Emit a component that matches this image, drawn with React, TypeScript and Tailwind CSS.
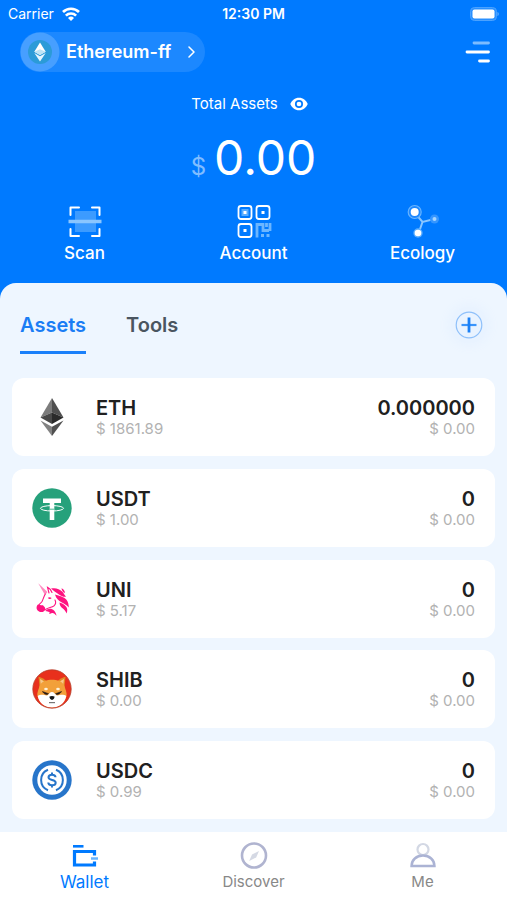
import type { ReactNode } from "react";

type Asset = {
    symbol: string;
    price: string;
    amount: string;
    value: string;
    icon: ReactNode;
};

function EthIcon() {
    return (
        <svg viewBox="0 0 40 40" className="size-10">
            <path d="M20 1 8.500 20.500 20 15.500Z" fill="#7c7c7c" />
            <path d="M20 1 31.500 20.500 20 15.500Z" fill="#4f4f4f" />
            <path d="M8.500 20.500 20 15.500V27Z" fill="#484848" />
            <path d="M31.500 20.500 20 15.500V27Z" fill="#2a2a2a" />
            <path d="M8.500 23.500 20 29.800V39Z" fill="#828282" />
            <path d="M31.500 23.500 20 29.800V39Z" fill="#505050" />
        </svg>
    );
}

function TetherIcon() {
    return (
        <svg viewBox="0 0 40 40" className="size-10">
            <circle cx="20" cy="20" r="19.700" fill="#26a17b" />
            <path d="M11 10.500h18v4.500h-6.700v17h-4.600V15H11Z" fill="#fff" />
            <ellipse
                cx="20"
                cy="20.300"
                rx="11.500"
                ry="2.700"
                fill="none"
                stroke="#fff"
                strokeWidth="1"
            />
            <path d="M18 21.200h4" stroke="#26a17b" strokeWidth=".8" />
        </svg>
    );
}

function UniIcon() {
    return (
        <svg viewBox="0 0 40 40" className="size-10" fill="#ff1280">
            <path d="M6.200 4.300 15.500 13l-2.500 3Z" fill="#ff8abf" />
            <path
                d="M17 14 15.500 8.300c2.200 1 3.700 3 4.500 5.200M13.300 15c-1.500 2.500-2 5-3.300 7.500-1.300 2-3.700 3.200-4.500 5.500M13 31c2.500-3 6.500-2 9-4.200 1.800-1.600 2-3.800 1-5.800"
                fill="none"
                stroke="#ff1280"
                strokeWidth="1.100"
                strokeLinecap="round"
            />
            <path d="M6 25.500c1.500.2 3 1 5 .8 1 1.500 2.500 2.200 2.300 3.600-.4 2.100-2 3.200-4.300 3.100-2.700-.2-4.700-2.300-4.400-4.800.1-1 .7-2.200 1.400-2.700Z" />
            <path d="M15.800 18.800c1.500-1 2.800-.8 3.800.3-.6 1.300-2.900 1.400-3.800-.3Z" />
            <path d="M19 9.500c4.500-1 8.500.3 11.200 3 1.500 1.600 2.500 3.800 3.800 5.300-3.200.2-5.200-1.200-7.400-2.600-2.300-1.500-4.800-2.900-7.600-5.700Z" />
            <path d="M29.500 9.300c2 .8 3.600 2.600 3.300 5-1.500-1-3-2.600-3.300-5Z" />
            <path d="M23 15.500c4.500 1.600 9 2.200 11.500 5.200 1.700 2 2.200 4.700 2.300 7.800-2.200-2.700-4.800-3.900-7.400-5.300-2.600-1.400-5.400-3.600-6.400-7.700Z" />
            <path d="M27.500 23.500c3.800 1.300 7 3.300 7.700 6.500.2 1.700 0 3.100-.6 4.500-1-2.500-2.700-4-4.400-5.400-1.500-1.200-2.700-3-2.700-5.600Z" />
            <path d="M13.500 32c3-3.900 9.800-3 11 4.800-1.500-2-2.800-3.100-4.500-2.900-1 .2-1.800 1-3 .7l.8-1.400c-1.500-.5-2.800-.7-4.300-1.200Z" />
        </svg>
    );
}

function ShibIcon() {
    return (
        <svg viewBox="0 0 40 40" className="size-10">
            <circle cx="20" cy="20" r="19.200" fill="#e8301c" />
            <path d="M6.500 7.800c3 .5 6.300 2.700 8.500 5l-7 9Z" fill="#e08a25" />
            <path d="M33.500 7.800c-3 .5-6.300 2.700-8.500 5l7 9Z" fill="#e08a25" />
            <path d="M8 10c2 .8 3.700 2 5 3.500L9 18Z" fill="#f7c98a" />
            <path d="M32 10c-2 .8-3.700 2-5 3.500l4 4.500Z" fill="#f7c98a" />
            <path
                d="M7.500 17C10 12 15 10.800 20 10.800S30 12 32.500 17c1 4 3 7.500 1.800 10.500C32 34 27 38.500 20 38.500S8 34 5.700 27.500C4.500 24.500 6.500 21 7.500 17Z"
                fill="#f2a03a"
            />
            <path
                d="M5.700 27c4.300-2.500 7.300 0 9.500-.5 1.800-1.500 2.800-3.500 4.800-3.500s3 2 4.800 3.500c2.200.5 5.200-2 9.500.5-1.500 7.500-7.300 11.500-14.300 11.500S7.200 34.500 5.700 27Z"
                fill="#fff"
            />
            <ellipse cx="14" cy="20" rx="1.800" ry="1.300" fill="#fff2d8" />
            <ellipse cx="26" cy="20" rx="1.800" ry="1.300" fill="#fff2d8" />
            <path d="m10.500 22.500 6 2.200c-1 1.500-4.200 1-6-2.200Z" fill="#251713" stroke="#251713" strokeWidth=".6" />
            <path d="m29.500 22.500-6 2.200c1 1.500 4.200 1 6-2.200Z" fill="#251713" stroke="#251713" strokeWidth=".6" />
            <path d="M17.500 27.500c1.500-.8 3.500-.8 5 0 .2 1.600-1.100 3-2.500 3.600-1.400-.6-2.700-2-2.500-3.600Z" fill="#151515" />
            <path d="M17 33.600h6" fill="none" stroke="#777" strokeWidth="1.200" />
            <circle cx="20" cy="20" r="19.200" fill="none" stroke="#b5402c" strokeWidth=".8" />
        </svg>
    );
}

function UsdcIcon() {
    return (
        <svg viewBox="0 0 40 40" className="size-10">
            <circle cx="20" cy="20" r="19.700" fill="#2775ca" />
            <circle cx="20" cy="20" r="14.700" fill="#fff" />
            <g fill="none" stroke="#2775ca" strokeWidth="2">
                <path d="M16 9.800a11 11 0 0 0 0 20.400M24 9.800a11 11 0 0 1 0 20.400" />
                <path d="M23.500 17.300c0-1.600-1.400-2.600-3.500-2.600s-3.500 1-3.500 2.600c0 3.700 7.200 1.700 7.200 5.400 0 1.600-1.500 2.600-3.700 2.600s-3.700-1-3.700-2.700M20 12.500v2.200M20 25.300v2.200" />
            </g>
        </svg>
    );
}

const assets: Asset[] = [
    { symbol: "ETH", price: "$ 1861.89", amount: "0.000000", value: "$ 0.00", icon: <EthIcon /> },
    { symbol: "USDT", price: "$ 1.00", amount: "0", value: "$ 0.00", icon: <TetherIcon /> },
    { symbol: "UNI", price: "$ 5.17", amount: "0", value: "$ 0.00", icon: <UniIcon /> },
    { symbol: "SHIB", price: "$ 0.00", amount: "0", value: "$ 0.00", icon: <ShibIcon /> },
    { symbol: "USDC", price: "$ 0.99", amount: "0", value: "$ 0.00", icon: <UsdcIcon /> },
];

function StatusBar() {
    return (
        <div className="grid grid-cols-3 items-center h-7 px-2 text-sm">
            <div className="flex items-center gap-2">
                <span>Carrier</span>
                <svg viewBox="0 0 18 14" className="w-[18px] h-[14px]" fill="none" stroke="#fff" strokeWidth="2.700">
                    <path d="M1 5a11.500 11.500 0 0 1 16 0M3.900 8.600a7.300 7.300 0 0 1 10.200 0" />
                    <path d="M9 14 6 10.900a4.300 4.300 0 0 1 6 0Z" fill="#fff" stroke="none" />
                </svg>
            </div>
            <span className="text-center font-semibold whitespace-nowrap">12:30 PM</span>
            <svg viewBox="0 0 30 14" className="w-[30px] h-[14px] justify-self-end">
                <rect x="1.500" y=".5" width="26" height="13" rx="4" fill="#2a90ff" stroke="#4ba2ff" />
                <rect x="3.500" y="2.500" width="22" height="9" rx="2" fill="#fff" />
                <path d="M28.500 5v4c1.600-.6 1.600-3.400 0-4Z" fill="#6db3ff" />
            </svg>
        </div>
    );
}

function ScanIcon() {
    return (
        <svg viewBox="0 0 36 36" className="size-9" fill="none">
            <rect x="8" y="8" width="21" height="21" fill="#3c9bff" />
            <path
                d="M3.500 12V4.500H12M25 4.500h7.500V12M32.500 26v7H25M12 33H3.500v-7"
                stroke="#fff"
                strokeWidth="2"
                strokeLinejoin="round"
                strokeLinecap="round"
            />
            <path d="M1.500 18.500h33" stroke="#8ac6ff" strokeWidth="3.500" />
        </svg>
    );
}

function QrIcon() {
    return (
        <svg viewBox="0 0 36 36" className="size-9" fill="none">
            <g stroke="#fff" strokeWidth="1.800">
                <rect x="2.500" y="3" width="13" height="13" rx="2.500" />
                <rect x="20.500" y="3" width="13" height="13" rx="2.500" />
                <rect x="2.500" y="21" width="13" height="13" rx="2.500" />
            </g>
            <rect x="5.500" y="6" width="7" height="7" fill="#5aadff" />
            <path d="M7.500 8h3v3h-3ZM25.500 8h3v3h-3ZM7.500 26h3v3h-3Z" fill="#fff" />
            <path d="M21 34.500V21.500h6v6h6M30.500 20v4M34 20v8" stroke="#6cb6ff" strokeWidth="2.800" />
            <path d="M25 31h3v3h-3ZM30.500 31h3v3h-3Z" fill="#6cb6ff" />
        </svg>
    );
}

function EcologyIcon() {
    return (
        <svg viewBox="0 0 36 36" className="size-9" fill="none">
            <path d="m9.500 9.500 8 9.500 12-3M17.500 19 14 29" stroke="#8ac6ff" strokeWidth="2" />
            <circle cx="9.700" cy="9" r="6.500" fill="#1d88ff" stroke="#68b4ff" strokeWidth="1.200" />
            <circle cx="9.700" cy="9" r="4" fill="#fff" />
            <circle cx="29.500" cy="16" r="4.500" fill="#3596ff" />
            <circle cx="29.500" cy="16" r="2" fill="#a5d4ff" />
            <circle cx="13" cy="30" r="4.700" fill="#58acff" />
            <circle cx="13" cy="30" r="3.300" fill="#fff" />
        </svg>
    );
}

function Action({ icon, label }: { icon: ReactNode; label: string }) {
    return (
        <button type="button" className="flex flex-col items-center text-[17px] leading-7 font-medium">
            {icon}
            {label}
        </button>
    );
}

function Header() {
    return (
        <header className="text-white pb-4">
            <StatusBar />
            <div className="flex items-center justify-between mt-1 pl-5 pr-4">
                <button
                    type="button"
                    className="flex items-center gap-1.5 h-10 pr-2 rounded-full bg-[#1c88ff] text-lg font-semibold"
                >
                    <svg viewBox="0 0 40 40" className="size-10">
                        <circle cx="20" cy="20" r="19.500" fill="#479fff" />
                        <circle cx="20" cy="20" r="12" fill="#2b9bd8" />
                        <path d="m20 10.500-5.700 9.200L20 23l5.700-3.300Z" fill="#fff" />
                        <path d="m14.300 21 5.700 3.200 5.700-3.200-5.700 8.500Z" fill="#e6f6ff" />
                        <path d="m14.300 19.700 5.700-2.500 5.700 2.500L20 23Z" fill="#bfe4f5" />
                    </svg>
                    Ethereum-ff
                    <svg viewBox="0 0 12 12" className="size-3 ml-2" fill="none" stroke="#fff" strokeWidth="1.500">
                        <path d="m4 1 5 5-5 5" strokeLinecap="round" strokeLinejoin="round" />
                    </svg>
                </button>
                <button type="button" aria-label="Menu">
                    <svg viewBox="0 0 26 24" className="w-[26px] h-6" strokeWidth="2.800" strokeLinecap="round">
                        <path d="M9 3h14.500" stroke="#7dbcff" />
                        <path d="M2 12h21.500M14.500 21h9" stroke="#fff" />
                    </svg>
                </button>
            </div>
            <div className="flex items-center justify-center gap-3 mt-5 pr-2 text-[15px] leading-6">
                <span>Total Assets</span>
                <button type="button" aria-label="Hide balance">
                    <svg viewBox="0 0 20 14" className="w-[18px] h-[14px]">
                        <path d="M10 0C5.500 0 2 3 .3 7 2 11 5.500 14 10 14s8-3 9.700-7C18 3 14.500 0 10 0Z" fill="#fff" />
                        <circle cx="10" cy="7" r="4.500" fill="#007aff" />
                        <circle cx="10" cy="7" r="2.600" fill="#fff" />
                    </svg>
                </button>
            </div>
            <div className="flex items-baseline justify-center gap-2 mt-[18px]">
                <span className="text-2xl text-[#80bdff]">$</span>
                <span className="text-5xl leading-[48px]">0.00</span>
            </div>
            <div className="grid grid-cols-3 mt-5">
                <Action icon={<ScanIcon />} label="Scan" />
                <Action icon={<QrIcon />} label="Account" />
                <Action icon={<EcologyIcon />} label="Ecology" />
            </div>
        </header>
    );
}

function AssetRow({ symbol, price, amount, value, icon }: Asset) {
    return (
        <li className="flex items-center gap-6 h-[78px] px-5 rounded-xl bg-white">
            {icon}
            <div className="flex-1">
                <p className="text-xl leading-6 font-semibold text-[#202020]">{symbol}</p>
                <p className="text-[15px] leading-[18px] text-[#b2b2b2]">{price}</p>
            </div>
            <div className="text-right">
                <p className="text-xl leading-6 font-semibold text-[#202020]">{amount}</p>
                <p className="text-[15px] leading-[18px] text-[#b2b2b2]">{value}</p>
            </div>
        </li>
    );
}

function TabBar() {
    return (
        <nav className="grid grid-cols-3 h-[68px] pt-2 bg-white text-[15px] text-[#888]">
            <a href="#wallet" className="flex flex-col items-center text-[17px] leading-6 text-[#007aff]">
                <svg viewBox="0 0 32 30" className="w-8 h-[30px]" fill="none" stroke="#007aff">
                    <path d="M4 6.300h10.500" strokeWidth="2.600" />
                    <path d="M25.500 15.500V11.500H5.500v13.500h20v-3.500" strokeWidth="3.200" />
                    <path d="M22 18.500h7" stroke="#68b4ff" strokeWidth="2.500" />
                </svg>
                Wallet
            </a>
            <a href="#discover" className="flex flex-col items-center leading-6">
                <svg viewBox="0 0 32 30" className="w-8 h-[30px]">
                    <circle cx="16" cy="15.500" r="12" fill="none" stroke="#b0b4d0" strokeWidth="2.600" />
                    <path d="m21 11-2.800 6.500-7 3.500 2.800-6.500Z" fill="#d5d9e4" />
                </svg>
                Discover
            </a>
            <a href="#me" className="flex flex-col items-center leading-6">
                <svg viewBox="0 0 32 30" className="w-8 h-[30px]" fill="none">
                    <circle cx="16" cy="9.500" r="5.500" stroke="#d3d8e4" strokeWidth="2.200" />
                    <path
                        d="M4.500 26c0-6 5-10.500 11.500-10.500S27.500 20 27.500 26Z"
                        fill="#fff"
                        stroke="#abb3d4"
                        strokeWidth="2.400"
                    />
                </svg>
                Me
            </a>
        </nav>
    );
}

export default function App() {
    return (
        <div className="flex flex-col min-h-screen bg-[#007aff] font-['Inter',sans-serif]">
            <Header />
            <main className="flex-1 flex flex-col pt-6 pb-[13px] rounded-t-2xl bg-[#eef6ff]">
                <div className="flex items-start justify-between px-5">
                    <div className="flex gap-10 text-xl leading-9 font-semibold">
                        <button type="button" className="pb-2 border-b-3 border-[#1a80fa] text-[#1a7df5]">
                            Assets
                        </button>
                        <button type="button" className="pb-2 border-b-3 border-transparent text-[#4a5560]">
                            Tools
                        </button>
                    </div>
                    <button
                        type="button"
                        aria-label="Add asset"
                        className="flex items-center justify-center size-9 rounded-full bg-[#e9f3ff] shadow-[0_0_8px_4px_#e9f3ff]"
                    >
                        <svg viewBox="0 0 28 28" className="size-7" fill="none">
                            <circle cx="14" cy="14" r="12.800" stroke="#8fc0fa" strokeWidth="1.200" />
                            <path d="M6.500 14h15" stroke="#3a94fb" strokeWidth="2.200" />
                            <path d="M14 6.500v15" stroke="#1c80f5" strokeWidth="2.800" />
                        </svg>
                    </button>
                </div>
                <ul className="flex-1 flex flex-col justify-between gap-2 mt-6 px-3">
                    {assets.map((asset) => (
                        <AssetRow key={asset.symbol} {...asset} />
                    ))}
                </ul>
            </main>
            <TabBar />
        </div>
    );
}
